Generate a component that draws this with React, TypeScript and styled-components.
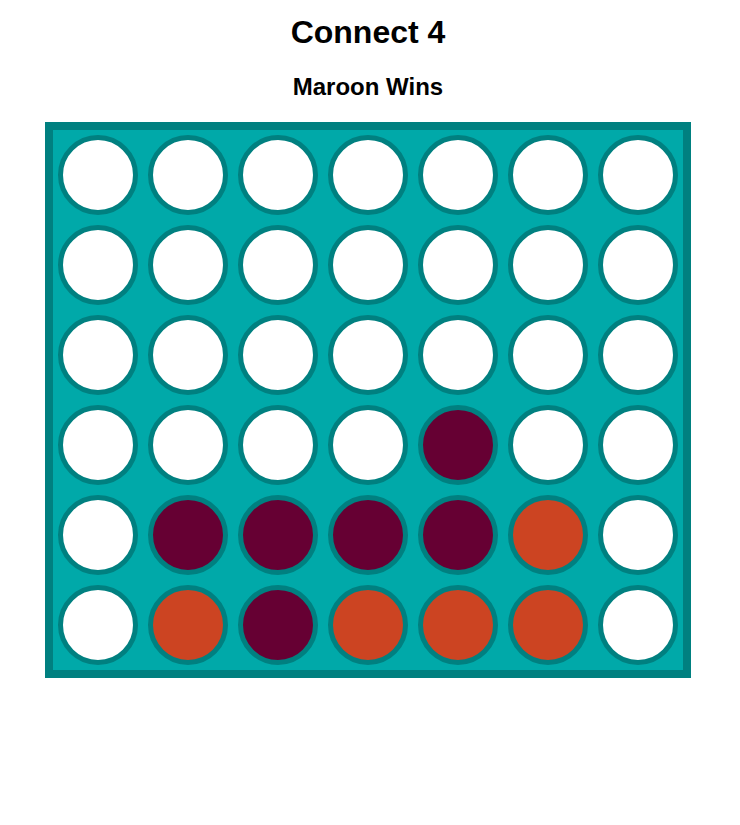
import React from "react"
import styled, { createGlobalStyle } from "styled-components"

const GlobalStyle = createGlobalStyle`
    body {
        margin: 0;
        background: #FFFFFF;
        font-family: "Liberation Sans", Arial, sans-serif;
    }
`

type Cell = "" | "M" | "O"

const Page = styled.div`
    width: 736px;
    text-align: center;
    padding-bottom: 20px;
`

const Title = styled.h1`
    font-size: 32px;
    line-height: 37px;
    font-weight: bold;
    margin: 14px 0 0;
    color: #000;
`

const Status = styled.h2`
    font-size: 24px;
    line-height: 28px;
    font-weight: bold;
    margin: 22px 0 0;
    color: #000;
`

const Board = styled.div`
    margin: 21px auto 0;
    width: max-content;
    display: grid;
    grid-template-columns: repeat(7, 80px);
    grid-auto-rows: 80px;
    gap: 10px;
    padding: 5px;
    background: #00A9A9;
    border: 8px solid #008080;
`

const Slot = styled.div<{ piece: Cell }>`
    box-sizing: border-box;
    width: 80px;
    height: 80px;
    border-radius: 50%;
    border: 5px solid #008080;
    background: ${({ piece }) =>
        piece === "M" ? "#660033" : piece === "O" ? "#CC4422" : "#FFFFFF"};
`

const grid: Cell[][] = [
    ["", "", "", "", "", "", ""],
    ["", "", "", "", "", "", ""],
    ["", "", "", "", "", "", ""],
    ["", "", "", "", "M", "", ""],
    ["", "M", "M", "M", "M", "O", ""],
    ["", "O", "M", "O", "O", "O", ""],
]

const App: React.FC = () => {
    return (
        <Page>
            <GlobalStyle />
            <Title>Connect 4</Title>
            <Status>Maroon Wins</Status>
            <Board>
                {grid.map((row, r) =>
                    row.map((cell, c) => <Slot key={`${r}-${c}`} piece={cell} />)
                )}
            </Board>
        </Page>
    )
}

export default App
